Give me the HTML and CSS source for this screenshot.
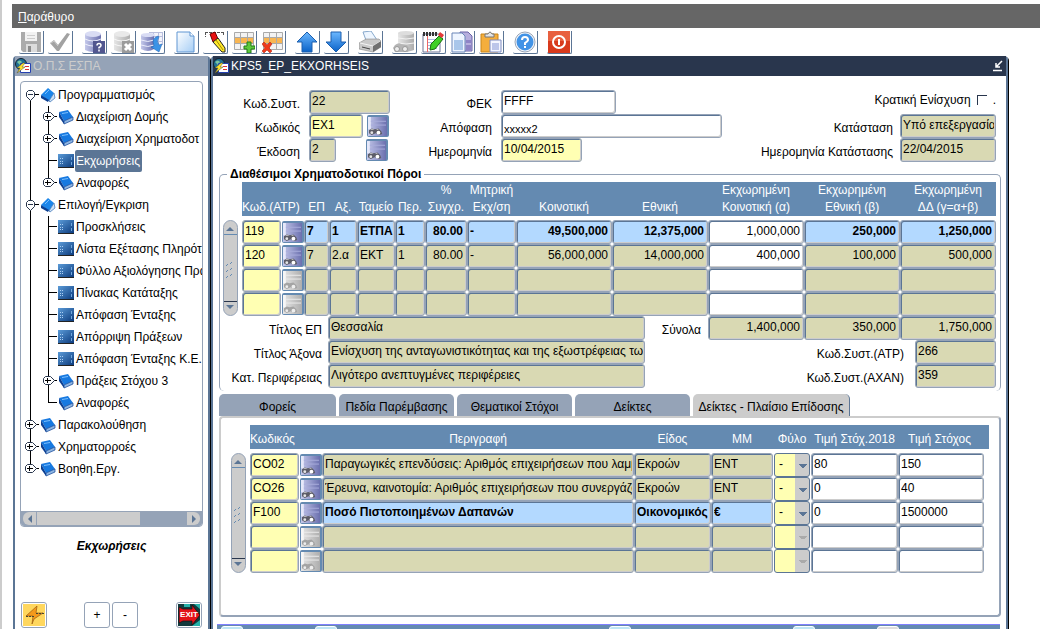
FILE: index.html
```html
<!DOCTYPE html>
<html lang="el">
<head>
    <meta charset="UTF-8">
    <title>Ο.Π.Σ ΕΣΠΑ</title>
    <link rel="stylesheet" href="styles.css">
</head>
<body>
<!-- icons -->
<svg class="defs" width="0" height="0">
    <defs>
        <linearGradient id="gBlue" x1="0" y1="0" x2="0" y2="1"><stop offset="0" stop-color="#6cb8ff"/><stop offset="1" stop-color="#0a62c8"/></linearGradient>
        <linearGradient id="gDb" x1="0" y1="0" x2="1" y2="0"><stop offset="0" stop-color="#c4c8ea"/><stop offset="1" stop-color="#6a6fae"/></linearGradient>
        <linearGradient id="gGrey" x1="0" y1="0" x2="1" y2="0"><stop offset="0" stop-color="#e6e6e6"/><stop offset="1" stop-color="#adadad"/></linearGradient>
        <linearGradient id="gForm" x1="0" y1="0" x2="1" y2="1"><stop offset="0" stop-color="#5b9bd8"/><stop offset="1" stop-color="#0b3a7c"/></linearGradient>
        <linearGradient id="gPage" x1="0" y1="0" x2="1" y2="1"><stop offset="0" stop-color="#ffffff"/><stop offset="1" stop-color="#a5cdf5"/></linearGradient>
    </defs>
    <symbol id="save" viewBox="0 0 22 22"><path d="M1 1h20v20H3l-2-2z" fill="#ababab"/><path d="M5 1h12v9H5z" fill="#f2f2f2"/><path d="M7 4.500h8M7 7.500h8" stroke="#ccc"/><path d="M6 13h11v8H6z" fill="#dcdcdc"/><path d="M8 15h3v6H8z" fill="#8c8c8c"/></symbol>
    <symbol id="check" viewBox="0 0 22 22"><path d="M1 12l4-3 4 5L18 2l3 1L10 20H8z" fill="#a2a2a2"/><path d="M2 12l3-2 4 5" fill="none" stroke="#ccc"/></symbol>
    <symbol id="dbBlue" viewBox="0 0 22 22"><path d="M2 3v16q8 4 16 0V3z" fill="url(#gDb)"/><ellipse cx="10" cy="3" rx="8" ry="3" fill="#d9dcf4"/><path d="M2 8q8 4 16 0M2 13q8 4 16 0" fill="none" stroke="#eceefb"/></symbol>
    <symbol id="dbGrey" viewBox="0 0 22 22"><path d="M2 3v16q8 4 16 0V3z" fill="url(#gGrey)"/><ellipse cx="10" cy="3" rx="8" ry="3" fill="#e9e9e9"/><path d="M2 8q8 4 16 0M2 13q8 4 16 0" fill="none" stroke="#f7f7f7"/></symbol>
    <symbol id="query" viewBox="0 0 22 22"><use href="#dbBlue"/><path d="M10 10h12v12H10z" fill="#51568f"/><path d="M14 14.500q0-2 2-2t2 2q0 1-2 2v1M16 18.500v2" fill="none" stroke="#fff" stroke-width="1.500"/></symbol>
    <symbol id="cancel" viewBox="0 0 22 22"><use href="#dbGrey"/><path d="M10 10h12v12H10z" fill="#9b9b9b"/><path d="M13 13l6 6M19 13l-6 6" stroke="#fff" stroke-width="3"/></symbol>
    <symbol id="fetch" viewBox="0 0 22 22"><path d="M8 1h14v13H8z" fill="#f3f4fb"/><path d="M8 5.500h14M8 10.500h14M12.500 1v13M17.500 1v13M21.500 1v13M8 1.500h14" stroke="#b9bedd"/><path d="M0 4v14q7 4 13 0V4z" fill="url(#gDb)"/><ellipse cx="7" cy="4" rx="7" ry="2" fill="#d9dcf4"/><path d="M0 9q7 3 13 0M0 14q7 3 13 0" fill="none" stroke="#eceefb"/><path d="M17 5q-7 2-4 10l-3 1 8 5 3-8-3 1q-3-4 0-8z" fill="#3b93e6" stroke="#1c5fae" stroke-width=".5"/></symbol>
    <symbol id="page" viewBox="0 0 22 22"><path d="M2 1h13l4 4v16H2z" fill="url(#gPage)" stroke="#5e95d2"/><path d="M15 1v4h4" fill="#fff" stroke="#5e95d2"/></symbol>
    <symbol id="erase" viewBox="0 0 22 22"><path d="M1 1.500h19M1.500 1v5M19.500 1v4" stroke="#555" stroke-dasharray="3 1"/><path d="M6 3l5-2 3 7-5 3z" fill="#e81010" stroke="#600"/><path d="M9 11l5-4 7 10v4h-3z" fill="#ffe92a" stroke="#222"/><path d="M12 9l7 10" stroke="#a68a00"/></symbol>
    <symbol id="grid" viewBox="0 0 22 22"><path d="M1 1h20v18H1z" fill="#f3f3f3"/><path d="M1 6h20v7H1z" fill="#f9b652"/><path d="M1.500 1.500h19v17h-19zM1 6.500h20M1 12.500h20M7.500 1v18M14.500 1v18" fill="none" stroke="#aaa"/></symbol>
    <symbol id="rowAdd" viewBox="0 0 22 22"><use href="#grid"/><path d="M14 11h4v4h4v3h-4v4h-4v-4h-3v-3h3z" fill="#5cc83c" stroke="#217a14"/></symbol>
    <symbol id="rowDel" viewBox="0 0 22 22"><use href="#grid"/><path d="M0 13l2-2 3 3 3-3 2 2-3 4 3 3-2 2-3-3-3 3-2-2 3-3z" fill="#ee3a1c" stroke="#a81c08" stroke-width=".5"/></symbol>
    <symbol id="up" viewBox="0 0 22 22"><path d="M11 1l10 10h-5v10H6V11H1z" fill="url(#gBlue)" stroke="#1c5fae"/></symbol>
    <symbol id="down" viewBox="0 0 22 22"><path d="M11 21L1 11h5V1h10v10h5z" fill="url(#gBlue)" stroke="#1c5fae"/></symbol>
    <symbol id="print" viewBox="0 0 22 22"><path d="M4 1l8-1 6 9-10 3z" fill="#eef6ff" stroke="#88a9cc"/><path d="M0 12l7-4h13l2 2v6l-8 5-14-3z" fill="#c9c9c9" stroke="#777" stroke-width=".5"/><path d="M1 12l13 3 8-5" fill="none" stroke="#f4f4f4"/><path d="M14 15v6l8-5v-6z" fill="#707070"/><path d="M3 16l8 2" stroke="#444"/></symbol>
    <symbol id="lovGrey" viewBox="0 0 22 22"><path d="M5 2v17q8 3 16 0V2z" fill="url(#gGrey)"/><ellipse cx="13" cy="2" rx="8" ry="2" fill="#ddd"/><path d="M5 7q8 2 16 0M5 12q8 2 16 0" fill="none" stroke="#f2f2f2"/><path d="M2 14q4-3 6-1l6 1 3 4-2 3H2l-2-4z" fill="#b5b5b5"/><circle cx="4" cy="18" r="2.500" fill="#eee" stroke="#999"/><circle cx="12" cy="18" r="2.500" fill="#eee" stroke="#999"/></symbol>
    <symbol id="edit" viewBox="0 0 22 22"><path d="M1 3h17v18H1z" fill="#fff" stroke="#6f7796"/><path d="M5 8.500h10M5 11.500h10M5 14.500h10M5 17.500h10" stroke="#a9bbe0"/><path d="M5.500 4v17" stroke="#e66"/><path d="M2 1v4M5 1v4M8 1v4M11 1v4M14 1v4" stroke="#333" stroke-width="2"/><path d="M8 19l1-6 8-8 4 3-8 10z" fill="#3fcf25" stroke="#1b6d10"/><path d="M16 4l2-3 4 3-2 3z" fill="#e43a3a"/></symbol>
    <symbol id="copy" viewBox="0 0 22 22"><path d="M9 1h8l4 4v15H9z" fill="#b6aedd" stroke="#6a63a6"/><path d="M1 2h10l3 3v16H1z" fill="#eef5ff" stroke="#6a86b8"/><path d="M3 9h9v10H3z" fill="#a9c6ea"/><path d="M15 9h5v3h-5zM15 14h5v5h-5z" fill="#8e84c6"/></symbol>
    <symbol id="paste" viewBox="0 0 22 22"><path d="M1 3h17v18H1z" fill="#f5ae3c" stroke="#c98518"/><path d="M5 6V3h3q2-4 4 0h2v3z" fill="#e5e5e5" stroke="#777"/><path d="M10 9h11v12H10z" fill="#f4f6ff" stroke="#7f8cc0"/><path d="M12 12h7v7h-7z" fill="#bcc6ea"/></symbol>
    <symbol id="help" viewBox="0 0 22 22"><circle cx="11" cy="11" r="10" fill="#f2f5fa" stroke="#9aa5b6"/><circle cx="11" cy="11" r="8.500" fill="#4293e6"/><path d="M8 9q0-3 3-3t3 3q0 1-3 3v2M11 15v2" fill="none" stroke="#fff" stroke-width="2"/></symbol>
    <symbol id="power" viewBox="0 0 22 22"><path d="M0 0h22v22H0z" fill="#d83a1c"/><path d="M0 0h22v10H0z" fill="#e8603f"/><circle cx="11" cy="11" r="6" fill="none" stroke="#fff" stroke-width="2"/><path d="M11 8v6" stroke="#fff" stroke-width="2"/></symbol>
    <symbol id="lov" viewBox="0 0 20 20"><path d="M0 0h20v20H0z" fill="url(#gDb)"/><path d="M0 0h3v13H0z" fill="#e6e8fa"/><path d="M3 4.500h16M3 8.500h16" stroke="#a9addc"/><path d="M1 14l3-2 3 1 4-1 3 3 1 3-3 1-4-2-4 2-3-2z" fill="#5d5d68"/><circle cx="4" cy="16.500" r="1.500" fill="#e6e6e6"/><circle cx="11" cy="16.500" r="2" fill="#fff"/><path d="M3 13h3M9 13h2" stroke="#c8c8c8"/></symbol>
    <symbol id="lovOff" viewBox="0 0 20 20"><path d="M0 0h20v20H0z" fill="url(#gGrey)"/><path d="M0 0h3v13H0z" fill="#f6f6f6"/><path d="M3 4.500h16M3 8.500h16" stroke="#ececec"/><path d="M1 14l3-2 3 1 4-1 3 3 1 3-3 1-4-2-4 2-3-2z" fill="#a4a4a4"/><circle cx="4" cy="16.500" r="1.500" fill="#eee"/><circle cx="11" cy="16.500" r="2" fill="#eee"/></symbol>
    <symbol id="app" viewBox="0 0 16 16"><circle cx="6" cy="6" r="5.500" fill="#1f6f94" stroke="#123"/><path d="M2 4q3-3 5 0l-2 3z" fill="#79c3a0"/><path d="M5.500 5.500h10v9h-10z" fill="#fff" stroke="#2340b0"/><path d="M10 8.500h4M10 11.500h4" stroke="#d33"/><path d="M8 5L2 10h3l-3 5 8-6H7l3-4z" fill="#ffe22e" stroke="#553" stroke-width=".5"/></symbol>
    <symbol id="bookShut" viewBox="0 0 16 16"><path d="M1 3l9-2 5 7-9 4z" fill="#1779e0"/><path d="M1 3l5 9v3L1 8z" fill="#0b3f92"/><path d="M6 12l9-4v3l-9 4z" fill="#8fb6e2" stroke="#0b3f92" stroke-width=".7"/><path d="M4 4.500l6-1" stroke="#7cc0ff"/></symbol>
    <symbol id="bookOpen" viewBox="0 0 16 16"><path d="M1 8l7-7 6 5-5 8z" fill="#1c86ea"/><path d="M1 8v3l7 4 1-2z" fill="#0b3f92"/><path d="M9 14l5-8 1 5-5 4z" fill="#cfe2f6" stroke="#3770b5" stroke-width=".7"/><path d="M5 7l4-4" stroke="#7cc0ff"/></symbol>
    <symbol id="form" viewBox="0 0 16 16"><path d="M0 1h16v13H0z" fill="url(#gForm)"/><path d="M0 14.500h16" stroke="#222"/><path d="M2 5.500h4M2 8.500h4M2 10.500h4" stroke="#a9cdf2" stroke-dasharray="1 1"/><path d="M13.500 4v8" stroke="#6fa6dc" stroke-dasharray="3 2"/></symbol>
    <symbol id="plus" viewBox="0 0 12 10"><path d="M2.500.500h5l4 4-4 4h-5l-2-2v-4z" fill="#fff" stroke="#29364d"/><path d="M2 4.500h6M4.500 2v5" stroke="#000"/></symbol>
    <symbol id="minus" viewBox="0 0 10 12"><path d="M2.500.500h4l2 2v4l-4 4-4-4v-4z" fill="#fff" stroke="#29364d"/><path d="M2 4.500h5" stroke="#29364d"/></symbol>
    <symbol id="bolt" viewBox="0 0 22 22"><path d="M0 0h22v22H0z" fill="#ffd75e"/><path d="M14 2L3 12h7l-1 8 2-5 9-6h-7z" fill="#f49a1c" stroke="#9a5a10" stroke-width=".7"/><path d="M3 12.500h8M13 9.500h8" stroke="#443" stroke-dasharray="2 1"/></symbol>
    <symbol id="exit" viewBox="0 0 22 22"><path d="M0 0h22v22H0z" fill="#133a3d"/><path d="M6 0h6v3H6zM16 0h6v5zM14 22l8-6v6z" fill="#25b0a8"/><path d="M1 3l4 2h9V1l8 10-8 10v-4H5l-4 2z" fill="#e3121a" stroke="#111" stroke-width=".7"/></symbol>
    <symbol id="grip" viewBox="0 0 12 24"><path d="M2 10l2-2M6 8l2-2M2 16l2-2M6 14l2-2M2 22l2-2M6 20l2-2" stroke="#648ab1"/></symbol>
</svg>

<div id="menubar"><a href="#"><u>Π</u>αράθυρο</a></div>

<div id="toolbar">
    <div class="group">
        <button aria-label="Αποθήκευση"><svg><use href="#save"/></svg></button>
        <button aria-label="Έλεγχος"><svg><use href="#check"/></svg></button>
    </div>
    <div class="group">
        <button aria-label="Αναζήτηση"><svg><use href="#query"/></svg></button>
        <button aria-label="Ακύρωση"><svg><use href="#cancel"/></svg></button>
        <button aria-label="Εκτέλεση"><svg><use href="#fetch"/></svg></button>
    </div>
    <div class="group">
        <button aria-label="Νέο"><svg><use href="#page"/></svg></button>
        <button aria-label="Καθαρισμός"><svg><use href="#erase"/></svg></button>
        <button aria-label="Εισαγωγή"><svg><use href="#rowAdd"/></svg></button>
        <button aria-label="Διαγραφή"><svg><use href="#rowDel"/></svg></button>
    </div>
    <div class="group">
        <button aria-label="Προηγούμενο"><svg><use href="#up"/></svg></button>
        <button aria-label="Επόμενο"><svg><use href="#down"/></svg></button>
    </div>
    <div class="group">
        <button aria-label="Εκτύπωση"><svg><use href="#print"/></svg></button>
    </div>
    <div class="group">
        <button aria-label="Λίστα τιμών"><svg><use href="#lovGrey"/></svg></button>
        <button aria-label="Επεξεργασία"><svg><use href="#edit"/></svg></button>
        <button aria-label="Αντιγραφή"><svg><use href="#copy"/></svg></button>
        <button aria-label="Επικόλληση"><svg><use href="#paste"/></svg></button>
    </div>
    <div class="group">
        <button aria-label="Βοήθεια"><svg><use href="#help"/></svg></button>
    </div>
    <div class="group">
        <button aria-label="Έξοδος"><svg><use href="#power"/></svg></button>
    </div>
</div>

<div id="desk">
    <!-- menu window -->
    <div class="win nav">
        <div class="title"><svg><use href="#app"/></svg>Ο.Π.Σ ΕΣΠΑ</div>
        <div class="treebox">
            <ul class="tree">
                <li><div class="node"><svg class="ex m"><use href="#minus"/></svg><svg class="ic"><use href="#bookOpen"/></svg><a href="#">Προγραμματισμός</a></div>
                    <ul>
                        <li><div class="node"><svg class="ex"><use href="#plus"/></svg><svg class="ic"><use href="#bookShut"/></svg><a href="#">Διαχείριση Δομής</a></div></li>
                        <li><div class="node"><svg class="ex"><use href="#plus"/></svg><svg class="ic"><use href="#bookShut"/></svg><a href="#">Διαχείριση Χρηματοδοτ</a></div></li>
                        <li><div class="node"><svg class="ic"><use href="#form"/></svg><a href="#" class="now">Εκχωρήσεις</a></div></li>
                        <li><div class="node"><svg class="ex"><use href="#plus"/></svg><svg class="ic"><use href="#bookShut"/></svg><a href="#">Αναφορές</a></div></li>
                    </ul>
                </li>
                <li><div class="node"><svg class="ex m"><use href="#minus"/></svg><svg class="ic"><use href="#bookOpen"/></svg><a href="#">Επιλογή/Εγκριση</a></div>
                    <ul>
                        <li><div class="node"><svg class="ic"><use href="#form"/></svg><a href="#">Προσκλήσεις</a></div></li>
                        <li><div class="node"><svg class="ic"><use href="#form"/></svg><a href="#">Λίστα Εξέτασης Πληρότ</a></div></li>
                        <li><div class="node"><svg class="ic"><use href="#form"/></svg><a href="#">Φύλλο Αξιολόγησης Πρα</a></div></li>
                        <li><div class="node"><svg class="ic"><use href="#form"/></svg><a href="#">Πίνακας Κατάταξης</a></div></li>
                        <li><div class="node"><svg class="ic"><use href="#form"/></svg><a href="#">Απόφαση Ένταξης</a></div></li>
                        <li><div class="node"><svg class="ic"><use href="#form"/></svg><a href="#">Απόρριψη Πράξεων</a></div></li>
                        <li><div class="node"><svg class="ic"><use href="#form"/></svg><a href="#">Απόφαση Ένταξης Κ.Ε..</a></div></li>
                        <li><div class="node"><svg class="ex"><use href="#plus"/></svg><svg class="ic"><use href="#bookShut"/></svg><a href="#">Πράξεις Στόχου 3</a></div></li>
                        <li><div class="node"><svg class="ic"><use href="#bookShut"/></svg><a href="#">Αναφορές</a></div></li>
                    </ul>
                </li>
                <li><div class="node"><svg class="ex"><use href="#plus"/></svg><svg class="ic"><use href="#bookShut"/></svg><a href="#">Παρακολούθηση</a></div></li>
                <li><div class="node"><svg class="ex"><use href="#plus"/></svg><svg class="ic"><use href="#bookShut"/></svg><a href="#">Χρηματορροές</a></div></li>
                <li><div class="node"><svg class="ex"><use href="#plus"/></svg><svg class="ic"><use href="#bookShut"/></svg><a href="#">Βοηθη.Εργ.</a></div></li>
            </ul>
            <div class="hbar"><i class="l"></i><b></b><i class="r"></i></div>
        </div>
        <p class="current">Εκχωρήσεις</p>
        <div class="navbtns">
            <button aria-label="Μετάβαση"><svg><use href="#bolt"/></svg></button>
            <button class="push">+</button>
            <button>-</button>
            <button class="exit"><svg><use href="#exit"/></svg><span>EXIT</span></button>
        </div>
    </div>

    <!-- main window -->
    <div class="win main">
        <div class="title"><svg><use href="#app"/></svg>KPS5_EP_EKXORHSEIS
            <svg class="min" viewBox="0 0 12 12"><path d="M10 1L4 7M4 3v4h4M1 10.500h9" fill="none" stroke="#fff" stroke-width="1.500"/></svg>
        </div>
        <div class="body">
            <div class="head">
                <div class="fields g1">
                    <label for="sys">Κωδ.Συστ.</label><div><input id="sys" class="f ro w81" value="22"></div>
                    <label for="code">Κωδικός</label><div><input id="code" class="f key w54" value="EX1"><button class="lov" aria-label="Λίστα κωδικών"><svg><use href="#lov"/></svg></button></div>
                    <label for="ver">Έκδοση</label><div><input id="ver" class="f ro w27" value="2"><button class="lov far" aria-label="Λίστα εκδόσεων"><svg><use href="#lov"/></svg></button></div>
                </div>
                <div class="fields g2">
                    <label for="fek">ΦΕΚ</label><div><input id="fek" class="f w115" value="FFFF"></div>
                    <label for="dec">Απόφαση</label><div><input id="dec" class="f w221 low" value="xxxxx2"></div>
                    <label for="date">Ημερομηνία</label><div><input id="date" class="f key w81" value="10/04/2015"></div>
                </div>
                <div class="fields g3">
                    <div class="tick"><label for="aid">Κρατική Ενίσχυση</label><input type="checkbox" id="aid">.</div>
                    <label for="st">Κατάσταση</label><div><input id="st" class="f ro w96" value="Υπό επεξεργασία"></div>
                    <label for="std">Ημερομηνία Κατάστασης</label><div><input id="std" class="f ro w96" value="22/04/2015"></div>
                </div>
            </div>

            <fieldset>
                <legend>Διαθέσιμοι Χρηματοδοτικοί Πόροι</legend>
                <div class="block">
                    <div class="vbar"><i><svg><use href="#grip"/></svg></i></div>
                    <table id="funds">
                        <colgroup><col class="c39"><col class="c23"><col class="c25"><col class="c28"><col class="c38"><col class="c30"><col class="c42"><col class="c49"><col><col><col><col><col></colgroup>
                        <thead>
                        <tr>
                            <th colspan="2" class="left">Κωδ.(ΑΤΡ)</th><th>ΕΠ</th><th>Αξ.</th><th>Ταμείο</th><th>Περ.</th>
                            <th>%<br>Συγχρ.</th><th>Μητρική<br>Εκχ/ση</th><th>Κοινοτική</th><th>Εθνική</th>
                            <th>Εκχωρημένη<br>Κοινοτική (α)</th><th>Εκχωρημένη<br>Εθνική (β)</th><th>Εκχωρημένη<br>ΔΔ (γ=α+β)</th>
                        </tr>
                        </thead>
                        <tbody></tbody>
                    </table>
                </div>
                <div class="sums">
                    <div class="fields titles">
                        <label for="t1">Τίτλος ΕΠ</label><input id="t1" class="f ro" value="Θεσσαλία">
                        <label for="t2">Τίτλος Άξονα</label><input id="t2" class="f ro" value="Ενίσχυση της ανταγωνιστικότητας και της εξωστρέφειας τω">
                        <label for="t3">Κατ. Περιφέρειας</label><input id="t3" class="f ro" value="Λιγότερο ανεπτυγμένες περιφέρειες">
                    </div>
                    <div class="totals">
                        <div class="line"><label for="s1">Σύνολα</label><input id="s1" class="f ro w96 num" value="1,400,000"><input class="f ro w96 num" aria-label="Σύνολο β" value="350,000"><input class="f ro w96 num" aria-label="Σύνολο γ" value="1,750,000"></div>
                        <div class="line"><label for="atr">Κωδ.Συστ.(ΑΤΡ)</label><input id="atr" class="f ro w81 wide" value="266"></div>
                        <div class="line"><label for="axan">Κωδ.Συστ.(ΑΧΑΝ)</label><input id="axan" class="f ro w81 wide" value="359"></div>
                    </div>
                </div>
            </fieldset>

            <div class="tabs" role="tablist">
                <button role="tab">Φορείς</button>
                <button role="tab">Πεδία Παρέμβασης</button>
                <button role="tab">Θεματικοί Στόχοι</button>
                <button role="tab">Δείκτες</button>
                <button role="tab" class="now" aria-selected="true">Δείκτες - Πλαίσιο Επίδοσης</button>
            </div>
            <div class="panel">
                <div class="block">
                    <div class="vbar"><i><svg><use href="#grip"/></svg></i></div>
                    <table id="marks">
                        <colgroup><col class="c49"><col class="c23"><col><col class="c77"><col class="c62"><col class="c38"><col class="c87"><col class="c91"></colgroup>
                        <thead>
                        <tr><th class="left">Κωδικός</th><th></th><th>Περιγραφή</th><th>Είδος</th><th>ΜΜ</th><th>Φύλο</th><th>Τιμή Στόχ.2018</th><th>Τιμή Στόχος</th></tr>
                        </thead>
                        <tbody></tbody>
                    </table>
                </div>
            </div>
            <div class="foot"><i></i><i></i><i></i><i></i><i></i></div>
        </div>
    </div>
</div>
<script src="script.js"></script>
</body>
</html>
```

FILE: styles.css
```css
*{
    margin: 0;
    padding: 0;
    box-sizing: border-box;
}
html,body{
    height: 100%;
}
body{
    display: flex;
    flex-direction: column;
    overflow: hidden;
    padding: 4px 0 0 10px;
    border-left: 2px solid #ccc;
    background: #fff;
    color: #000;
    font: 12px/14px "Liberation Sans", Arial, sans-serif;
}
button,input,select{
    font: inherit;
    color: inherit;
    border: 0;
    border-radius: 0;
    outline: 0;
}
button{
    background: #fff;
}
a{
    color: inherit;
    text-decoration: none;
}
ul{
    list-style: none;
}
svg{
    display: block;
    flex: none;
}
.defs{
    position: absolute;
}

/* menu + toolbar */
#menubar{
    flex: none;
    height: 24px;
    padding-left: 6px;
    background: #666;
    color: #fff;
    line-height: 26px;
}
#toolbar{
    flex: none;
    display: flex;
    gap: 9px;
    height: 28px;
    padding: 3px 0 0 7px;
}
#toolbar .group{
    display: flex;
    gap: 4px;
}
#toolbar button{
    width: 25px;
    height: 23px;
    border-right: 1px solid #5b7595;
    border-bottom: 1px solid #5b7595;
    border-radius: 0 0 2px 2px;
}
#toolbar svg{
    width: 22px;
    height: 22px;
    margin-left: 1px;
}

/* windows */
#desk{
    flex: 1;
    display: flex;
    gap: 1px;
    min-height: 0;
    padding-right: 32px;
}
.win{
    display: flex;
    flex-direction: column;
    min-height: 0;
    min-width: 0;
    border-left: 2px solid #5b7595;
    border-right: 2px solid #5b7595;
    border-radius: 4px 4px 0 0;
    box-shadow: 1px 1px 0 #000;
}
.nav{
    flex: 0 0 197px;
    margin-left: 1px;
}
.main{
    flex: 1;
}
.title{
    flex: none;
    display: flex;
    align-items: center;
    gap: 2px;
    height: 20px;
    background: #29364d;
    color: #fff;
}
.title svg{
    width: 16px;
    height: 16px;
}
.title .min{
    width: 12px;
    height: 12px;
    margin: 0 2px 0 auto;
}
.nav .title{
    background: #95a3b7;
    color: #ccc;
}

/* tree */
.treebox{
    display: flex;
    flex-direction: column;
    height: 446px;
    margin: 5px 5px 0 5px;
    border: 1px solid #95a3b7;
    border-radius: 4px;
    overflow: hidden;
}
.tree{
    flex: 1;
    padding: 2px 0 0 4px;
    overflow: hidden;
}
.tree li{
    position: relative;
}
.tree li::before{
    content: "";
    position: absolute;
    left: 5px;
    top: 0;
    bottom: 0;
    border-left: 1px solid #000;
}
.tree > li:first-child::before{
    top: 11px;
}
.tree li:last-child::before{
    bottom: auto;
    height: 11px;
}
.tree ul{
    padding-left: 18px;
}
.node{
    position: relative;
    display: flex;
    align-items: center;
    height: 22px;
    padding-left: 15px;
    white-space: nowrap;
}
.node::before{
    content: "";
    position: absolute;
    left: 5px;
    top: 10px;
    width: 9px;
    border-top: 1px solid #000;
}
.node .ex{
    position: absolute;
    left: 0;
    top: 6px;
    width: 12px;
    height: 10px;
}
.node .ex.m{
    left: 1px;
    width: 10px;
    height: 12px;
}
.node .ic{
    width: 16px;
    height: 16px;
}
.node a{
    margin-left: 1px;
    padding: 0 2px 0 1px;
    line-height: 22px;
}
.node a.now{
    background: #5b7595;
    color: #fff;
    border-radius: 2px;
}
.hbar{
    flex: none;
    display: flex;
    height: 15px;
    padding: 1px 2px;
    background: #95a3b7;
}
.hbar b{
    width: 103px;
    margin-right: auto;
    background: #ccc;
}
.hbar i{
    width: 13px;
    background: #ccc;
    border-radius: 6px 0 0 6px;
    margin-right: 1px;
}
.hbar i.r{
    border-radius: 0 6px 6px 0;
    margin-right: 0;
}
.hbar i::after{
    content: "";
    display: block;
    margin: 3px 0 0 5px;
    border: 4px solid transparent;
    border-left-width: 0;
    border-right-color: #5b7595;
    width: 0;
}
.hbar i.r::after{
    border-width: 4px 0 4px 4px;
    border-left-color: #5b7595;
}
.current{
    margin-top: 12px;
    text-align: center;
    font-weight: bold;
    font-style: italic;
}
.navbtns{
    display: flex;
    gap: 2px;
    margin: auto 6px 1px;
}
.navbtns button{
    position: relative;
    width: 26px;
    height: 26px;
    padding: 1px;
    border: 1px solid #95a3b7;
    border-radius: 3px;
}
.navbtns svg{
    width: 22px;
    height: 22px;
}
.navbtns .push{
    margin-left: 35px;
}
.navbtns .exit{
    margin-left: auto;
}
.navbtns .exit span{
    position: absolute;
    left: 0;
    right: 0;
    top: 5px;
    color: #fff;
    font-size: 8px;
    font-weight: bold;
}

/* fields */
.body{
    padding: 14px 5px 0 6px;
}
.f{
    display: block;
    height: 24px;
    min-width: 0;
    padding: 0 1px 3px 2px;
    border: 1px solid #95a3b7;
    border-radius: 3px;
    box-shadow: inset 1px 1px 0 #5b7595, inset -1px -1px 0 #ccc;
    background: #fff;
}
.ro{
    background: #d9d9b3;
}
.key{
    background: #ffffb3;
}
.sel{
    background: #b3d9ff;
    font-weight: bold;
}
.num{
    padding-right: 3px;
    text-align: right;
}
.low{
    padding: 5px 2px 0;
    font-size: 11px;
}
.w27{ width: 27px; }
.w54{ width: 54px; }
.w81{ width: 81px; }
.w96{ width: 96px; }
.w115{ width: 115px; }
.w221{ width: 221px; }

.lov{
    width: 22px;
    height: 22px;
    padding: 1px;
    border-radius: 2px;
    background: #648ab1;
}
.lov svg{
    width: 19px;
    height: 19px;
}
.head{
    display: flex;
}
.fields{
    display: grid;
    grid-auto-rows: 24px;
    align-items: end;
    column-gap: 9px;
}
.fields label,.line label{
    line-height: 20px;
    text-align: right;
    white-space: nowrap;
}
.fields div{
    display: flex;
    align-items: center;
    gap: 4px;
}
.fields .far{
    margin-left: 26px;
}
.g1{
    grid-template-columns: 81px 82px;
}
.g2{
    grid-template-columns: 101px 221px;
}
.g3{
    grid-template-columns: auto 96px;
    column-gap: 7px;
    margin: 0 5px 0 auto;
}
.g3 .tick{
    grid-column: 1 / -1;
    align-self: start;
    justify-content: flex-end;
    gap: 6px;
}
.tick input{
    appearance: none;
    width: 10px;
    height: 10px;
    border: solid #29364d;
    border-width: 1px 0 0 1px;
}

/* tables */
fieldset{
    margin-top: 5px;
    min-width: 0;
    padding: 1px 4px 3px 3px;
    border: 1px solid #95a3b7;
    border-bottom: 0;
    border-radius: 5px;
}
legend{
    margin-left: 4px;
    padding: 0 3px;
    font-weight: bold;
}
.block{
    display: flex;
    gap: 4px;
}
.vbar{
    position: relative;
    flex: none;
    width: 15px;
    margin-top: 38px;
    border: 1px solid #95a3b7;
    border-radius: 8px;
    background: #ccc;
}
.vbar::before,.vbar::after{
    content: "";
    position: absolute;
    left: 2px;
    border: 4px solid transparent;
}
.vbar::before{
    top: 2px;
    border-bottom-color: #5b7595;
}
.vbar::after{
    bottom: 2px;
    border-top-color: #5b7595;
}
.vbar i{
    display: flex;
    align-items: center;
    height: calc(100% - 26px);
    margin: 13px 0;
    border-top: 1px solid #648ab1;
    border-bottom: 1px solid #29364d;
}
.vbar svg{
    width: 12px;
    height: 24px;
}
table{
    flex: 1;
    width: 0;
    table-layout: fixed;
    border-collapse: collapse;
}
th{
    height: 34px;
    background: #648ab1;
    color: #fff;
    font-weight: normal;
    line-height: 17px;
    vertical-align: bottom;
    white-space: nowrap;
}
th.left{
    text-align: left;
}
tbody::before{
    content: "";
    display: block;
    height: 4px;
}
td{
    height: 24px;
}
td .f{
    width: 100%;
}
td .lov{
    display: block;
    margin: 0 auto;
}
.c23{ width: 23px; }
.c25{ width: 25px; }
.c28{ width: 28px; }
.c30{ width: 30px; }
.c38{ width: 38px; }
.c39{ width: 39px; }
.c42{ width: 42px; }
.c49{ width: 49px; }
.c62{ width: 62px; }
.c77{ width: 77px; }
.c87{ width: 87px; }
.c91{ width: 91px; }

.sums{
    display: flex;
    justify-content: space-between;
}
.titles{
    flex: 0 0 422px;
    grid-template-columns: 99px 1fr;
    column-gap: 6px;
}
.line{
    display: flex;
    justify-content: flex-end;
    align-items: flex-end;
}
.line label{
    margin-right: 7px;
}
.line .wide{
    margin-left: 4px;
}

/* tabs */
.tabs{
    display: flex;
    gap: 3px;
    margin-top: 3px;
}
.tabs button{
    width: 115px;
    height: 22px;
    padding-top: 3px;
    border-radius: 5px 5px 0 0;
    background: #95a3b7;
    white-space: nowrap;
}
.tabs button:first-child{
    width: 117px;
}
.tabs .now{
    width: 157px;
    background: #ccc;
    border-right: 1px solid #5b7595;
}
.panel{
    padding: 7px 10px 42px 10px;
    border: 2px solid #ccc;
    border-right-color: #95a3b7;
    border-bottom-color: #95a3b7;
    border-radius: 4px;
}
.panel .vbar{
    margin-top: 28px;
}
.panel th{
    height: 24px;
    line-height: 20px;
}
.panel th:last-child{
    padding-right: 8px;
}
.panel td:last-child{
    padding-right: 5px;
}
.list{
    display: block;
    width: 36px;
    height: 24px;
    margin: 0 auto;
    padding: 0 3px 2px 4px;
    appearance: none;
    border: 1px solid #5b7595;
    border-radius: 3px;
    background: linear-gradient(#5b7595, #5b7595) 24px 10px / 8px 1px no-repeat, linear-gradient(#5b7595, #5b7595) 25px 11px / 6px 1px no-repeat, linear-gradient(#5b7595, #5b7595) 26px 12px / 4px 1px no-repeat, linear-gradient(#5b7595, #5b7595) 27px 13px / 2px 1px no-repeat, linear-gradient(90deg, #ffffb3 20px, #ccc 20px);
}
.list:disabled{
    opacity: 1;
    background: linear-gradient(#aaa, #aaa) 24px 10px / 8px 1px no-repeat, linear-gradient(#aaa, #aaa) 25px 11px / 6px 1px no-repeat, linear-gradient(#aaa, #aaa) 26px 12px / 4px 1px no-repeat, linear-gradient(90deg, #ffffb3 20px, #ccc 20px);
}
.foot{
    display: flex;
    gap: 72px;
    height: 24px;
    margin: 7px 1px 0 -2px;
    padding: 1px 4px;
    border-top: 1px solid #8080ff;
    background: #648ab1;
}
.foot i{
    width: 22px;
    height: 22px;
    border: 1px solid #fff;
    border-radius: 3px;
    background: #bfe6f5;
}
.foot i:nth-child(3){
    margin-left: 200px;
}
.foot i:nth-child(4){
    margin-left: 90px;
}
.foot i:last-child{
    margin-left: -10px;
    background: #ddd;
}
```

FILE: script.js
```js
var funds = [
        ['119', '7', '1', 'ΕΤΠΑ', '1', '80.00', '-', '49,500,000', '12,375,000', '1,000,000', '250,000', '1,250,000'],
        ['120', '7', '2.α', 'ΕΚΤ', '1', '80.00', '-', '56,000,000', '14,000,000', '400,000', '100,000', '500,000'],
        [],
        []
    ],
    marks = [
        ['CO02', 'Παραγωγικές επενδύσεις: Αριθμός επιχειρήσεων που λαμβ', 'Εκροών', 'ΕΝΤ', '-', '80', '150'],
        ['CO26', 'Έρευνα, καινοτομία: Αριθμός επιχειρήσεων που συνεργάζο', 'Εκροών', 'ΕΝΤ', '-', '0', '40'],
        ['F100', 'Ποσό Πιστοποιημένων Δαπανών', 'Οικονομικός', '€', '-', '0', '1500000'],
        [],
        []
    ],
    fundNames = ['Κωδ.(ΑΤΡ)', 'ΕΠ', 'Αξ.', 'Ταμείο', 'Περ.', '% Συγχρ.', 'Μητρική Εκχ/ση', 'Κοινοτική', 'Εθνική', 'Κοινοτική (α)', 'Εθνική (β)', 'ΔΔ'],
    markNames = ['Κωδικός', 'Περιγραφή', 'Είδος', 'ΜΜ', 'Φύλο', 'Τιμή Στόχ.2018', 'Τιμή Στόχος'];

// cols: key = yellow, ro = read only, '' = editable, list = drop-down
function fill(id, rows, names, cols, current) {
    var html = '';
    for (var i = 0; i < rows.length; i++) {
        html += '<tr>';
        for (var j = 0; j < cols.length; j++) {
            var v = rows[i][j] || '', c = cols[j];
            // read only cells of the current row turn blue
            if (i === current) {
                c = c.replace('ro', 'sel');
            }
            if (c === 'list') {
                html += '<td><select class="list" aria-label="' + names[j] + '"' + (v ? '' : ' disabled') + '><option>' + v + '</option></select></td>';
            } else {
                html += '<td><input class="f ' + c + '" aria-label="' + names[j] + '" value="' + v + '"></td>';
            }
            if (j === 0) {
                html += '<td><button class="lov" aria-label="Λίστα τιμών"><svg><use href="#' + (v ? 'lov' : 'lovOff') + '"/></svg></button></td>';
            }
        }
        html += '</tr>';
    }
    document.querySelector('#' + id + ' tbody').innerHTML = html;
}
fill('funds', funds, fundNames, ['key', 'ro', 'ro', 'ro', 'ro', 'ro num', 'ro', 'ro num', 'ro num', 'num', 'ro num', 'ro num'], 0);
fill('marks', marks, markNames, ['key', 'ro', 'ro', 'ro', 'list', '', ''], 2);
```
